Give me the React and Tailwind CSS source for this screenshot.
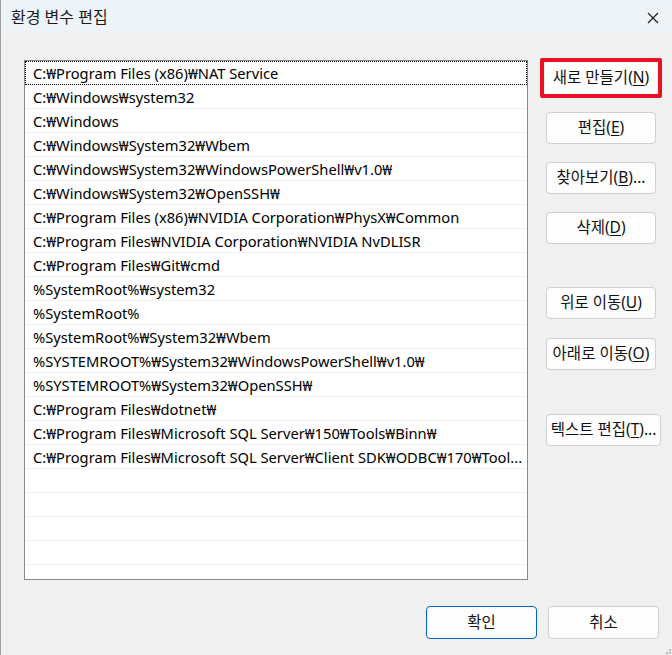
import React from "react";

const paths = [
  "C:₩Program Files (x86)₩NAT Service",
  "C:₩Windows₩system32",
  "C:₩Windows",
  "C:₩Windows₩System32₩Wbem",
  "C:₩Windows₩System32₩WindowsPowerShell₩v1.0₩",
  "C:₩Windows₩System32₩OpenSSH₩",
  "C:₩Program Files (x86)₩NVIDIA Corporation₩PhysX₩Common",
  "C:₩Program Files₩NVIDIA Corporation₩NVIDIA NvDLISR",
  "C:₩Program Files₩Git₩cmd",
  "%SystemRoot%₩system32",
  "%SystemRoot%",
  "%SystemRoot%₩System32₩Wbem",
  "%SYSTEMROOT%₩System32₩WindowsPowerShell₩v1.0₩",
  "%SYSTEMROOT%₩System32₩OpenSSH₩",
  "C:₩Program Files₩dotnet₩",
  "C:₩Program Files₩Microsoft SQL Server₩150₩Tools₩Binn₩",
  "C:₩Program Files₩Microsoft SQL Server₩Client SDK₩ODBC₩170₩Tool...",
];

const uiFont = { fontFamily: '"Noto Sans", "Noto Sans CJK KR", sans-serif' };

function Btn({ label, hot, rest = "", className = "" }) {
  return (
    <button
      className={`h-[32px] w-[110px] rounded-[4px] border border-[#d0d0d0] bg-[#fdfdfd] text-[15.5px] text-[#111] whitespace-nowrap flex items-center justify-center ${className}`}
      style={uiFont}
    >
      {label}(<span className="underline underline-offset-2">{hot}</span>){rest}
    </button>
  );
}

export default function App() {
  const empty = Array.from({ length: 5 });

  return (
    <div
      className="w-[672px] h-[655px] bg-[#f0f0f0] border-l border-[#a0a0a0] flex flex-col relative overflow-hidden"
      style={uiFont}
    >
      {/* title bar */}
      <div className="h-[34px] bg-[#eef3f8] flex items-center justify-between pl-[10px] pr-[13px] shrink-0">
        <span className="text-[16px] text-[#1a1a1a]">환경 변수 편집</span>
        <svg width="12" height="12" viewBox="0 0 12 12" className="mt-[1px]">
          <path d="M1 1 L11 11 M11 1 L1 11" stroke="#1a1a1a" strokeWidth="1.1" />
        </svg>
      </div>

      <div className="flex pl-[23px] pt-[26px]">
        {/* list */}
        <div className="w-[504px] h-[520px] border border-[#828790] bg-white overflow-hidden">
          {paths.map((p, i) => (
            <div
              key={i}
              className={`h-[24px] flex items-center pt-[2px] pl-[8px] pr-[4px] text-[14.7px] text-black border-b border-[#f0f0f0] whitespace-nowrap ${
                i === 0 ? "outline outline-1 outline-dotted outline-black -outline-offset-1" : ""
              }`}
            >
              {p}
            </div>
          ))}
          {empty.map((_, i) => (
            <div key={i} className="h-[24px] border-b border-[#f0f0f0]" />
          ))}
        </div>

        {/* buttons */}
        <div className="flex flex-col ml-[18px] pt-[2px]">
          <div className="-ml-[6px] -mt-[4px] w-[122px] h-[40px] border-[4px] border-[#e81123] rounded-[2px] flex items-center justify-center">
            <Btn label="새로 만들기" hot="N" className="w-[112px] h-[32px] border-none" />
          </div>
          <Btn label="편집" hot="E" className="mt-[14px]" />
          <Btn label="찾아보기" hot="B" rest="..." className="mt-[18px]" />
          <Btn label="삭제" hot="D" className="mt-[18px]" />
          <Btn label="위로 이동" hot="U" className="mt-[43px]" />
          <Btn label="아래로 이동" hot="O" className="mt-[19px]" />
          <Btn label="텍스트 편집" hot="T" rest="..." className="mt-[44px] w-[115px]" />
        </div>
      </div>

      {/* footer */}
      <div className="flex justify-end gap-[11px] pr-[13px] mt-[26px]">
        <button className="h-[33px] w-[111px] rounded-[4px] border border-[#0067c0] bg-[#fdfdfd] text-[15.5px] text-[#111]">
          확인
        </button>
        <button className="h-[33px] w-[111px] rounded-[4px] border border-[#d0d0d0] bg-[#fdfdfd] text-[15.5px] text-[#111]">
          취소
        </button>
      </div>

      {/* resize grip */}
      <div className="absolute right-0 bottom-0 grid grid-cols-2 gap-[1px] p-[1px]">
        <span className="w-[2px] h-[2px]" />
        <span className="w-[2px] h-[2px] bg-[#b8b8b8]" />
        <span className="w-[2px] h-[2px] bg-[#b8b8b8]" />
        <span className="w-[2px] h-[2px] bg-[#b8b8b8]" />
      </div>
    </div>
  );
}
